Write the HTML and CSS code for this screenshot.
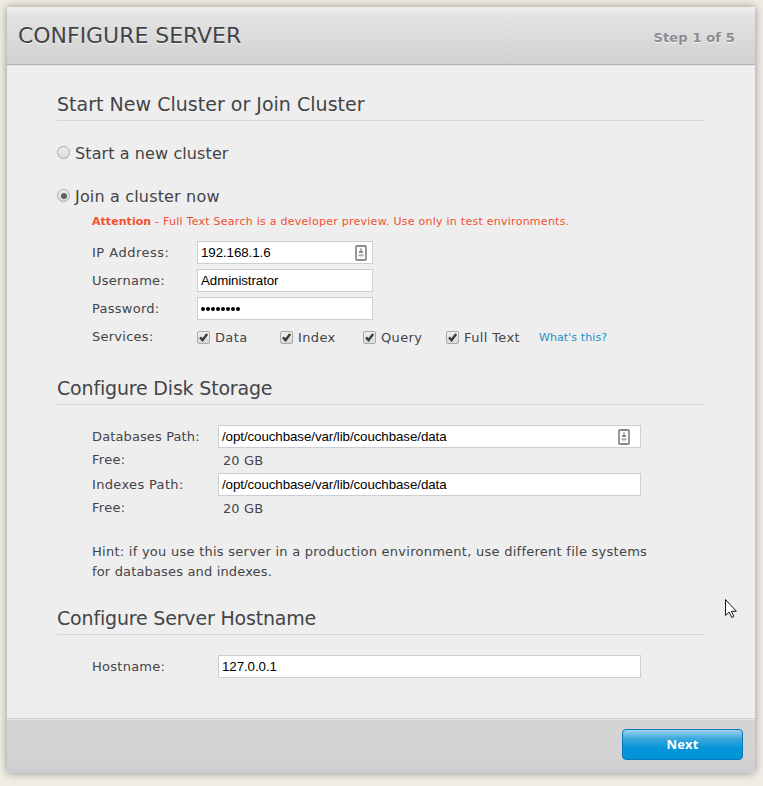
FILE: index.html
```
<!DOCTYPE html>
<html lang="en">
<head>
<meta charset="utf-8">
<title>Configure Server</title>
<link rel="stylesheet" href="styles.css">
</head>
<body>
<svg class="defs" width="0" height="0" aria-hidden="true">
  <symbol id="check" viewBox="0 0 12 12"><path d="M2.2 5.8l2.8 3L10 2.2" fill="none" stroke="#3c3c3c" stroke-width="2.6"/></symbol>
  <symbol id="card" viewBox="0 0 12 16">
    <rect x="1" y="1" width="10" height="14" rx="1" fill="#fff" stroke="#8c8c8c" stroke-width="1.8"/>
    <path d="M6 3.2v4" stroke="#999" stroke-width="1.6"/><path d="M4 7h4" stroke="#8a8a8a" stroke-width="2"/>
    <path d="M3.5 10.3h5" stroke="#aaa" stroke-width="2"/><path d="M4 12h4" stroke="#ddd"/>
  </symbol>
</svg>
<main class="panel">
  <header class="header">
    <h1>CONFIGURE SERVER</h1>
    <span class="step">Step 1 of 5</span>
  </header>
  <div class="content">
    <section class="cluster">
      <h2>Start New Cluster or Join Cluster</h2>
      <div class="choice new"><span class="radio"></span><span class="new-label">Start a new cluster</span></div>
      <div class="choice join"><span class="radio on"></span><span class="join-label">Join a cluster now</span></div>
      <p class="warning"><b>Attention</b> - Full Text Search is a developer preview. Use only in test environments.</p>
      <div class="row"><label class="wide">IP Address:</label><div class="field">192.168.1.6<svg class="card"><use href="#card"/></svg></div></div>
      <div class="row"><label>Username:</label><div class="field">Administrator</div></div>
      <div class="row"><label>Password:</label><div class="field password"><i></i><i></i><i></i><i></i><i></i><i></i><i></i><i></i></div></div>
      <div class="row services"><label>Services:</label>
        <div class="service"><span class="box"><svg><use href="#check"/></svg></span><span>Data</span></div>
        <div class="service"><span class="box"><svg><use href="#check"/></svg></span><span>Index</span></div>
        <div class="service"><span class="box"><svg><use href="#check"/></svg></span><span>Query</span></div>
        <div class="service last"><span class="box"><svg><use href="#check"/></svg></span><span>Full Text</span></div>
        <a class="help">What's this?</a>
      </div>
    </section>
    <section class="storage">
      <h2>Configure Disk Storage</h2>
      <div class="row"><label>Databases Path:</label><div class="field">/opt/couchbase/var/lib/couchbase/data<svg class="card"><use href="#card"/></svg></div></div>
      <div class="row free"><label>Free:</label><span>20 GB</span></div>
      <div class="row"><label class="indexes">Indexes Path:</label><div class="field">/opt/couchbase/var/lib/couchbase/data</div></div>
      <div class="row free"><label>Free:</label><span>20 GB</span></div>
      <p class="hint">Hint: if you use this server in a production environment, use different file systems<br><span>for databases and indexes.</span></p>
    </section>
    <section class="hostname">
      <h2>Configure Server Hostname</h2>
      <div class="row"><label>Hostname:</label><div class="field">127.0.0.1</div></div>
    </section>
  </div>
  <footer class="footer"><button class="next">Next</button></footer>
</main>
<svg class="cursor" viewBox="0 0 12 19" width="12" height="19"><path d="M.5.5v16l3.7-3.4 2.5 5.4 2.2-1-2.5-5.2h5z" fill="#fff" stroke="#151525"/></svg>
</body>
</html>
```
FILE: styles.css
```
* { box-sizing: border-box; }
html, body { margin: 0; height: 786px; overflow: hidden; }
body { background: #f0ede6; padding: 7px 8px 13px 7px; font: 13px/20px "DejaVu Sans", sans-serif; letter-spacing: .26px; color: #444448; }
.defs { position: absolute; }
.panel { height: 766px; display: flex; flex-direction: column; background: #eee; border-radius: 0 0 3px 3px; box-shadow: 0 0 9px rgba(70, 70, 50, .55); }
.header { height: 58px; display: flex; justify-content: space-between; padding: 0 20px 0 11px; border-bottom: 1px solid #b0b6bc; background: linear-gradient(#efefef 0, #e3e3e3 9px, #d1d1d1); box-shadow: 0 1px #dbe0e3, 0 2px #f5f5f5; }
h1 { margin: 15px 0 0; font-size: 22px; line-height: 28px; font-weight: 400; letter-spacing: -.04px; text-shadow: 0 1px #f4f4f4; }
.step { margin-top: 21px; font-weight: 700; letter-spacing: .14px; color: #8b8b90; text-shadow: 0 1px #f4f4f4; }
.content { flex: 1; padding: 27px 50px 0; }
.cluster { height: 284px; }
.storage { height: 230px; }
h2 { height: 29px; margin: 0; border-bottom: 1px solid #d3d9da; font-size: 19px; line-height: 24px; font-weight: 400; letter-spacing: .02px; }
.choice { display: flex; align-items: center; font-size: 16px; line-height: 24px; gap: 5px; letter-spacing: .1px; }
.new { margin-top: 21px; }
.join { margin-top: 19px; letter-spacing: .17px; }
.radio { width: 13px; height: 13px; margin-top: -3px; border: 1px solid #a8a8a8; border-radius: 50%; background: linear-gradient(#eee, #d9d9d9); display: grid; place-items: center; }
.radio.on::after { content: ""; width: 6px; height: 6px; border-radius: 50%; background: #606060; }
.warning { margin: 4px 0 10px 35px; height: 18px; font-size: 11px; line-height: 18px; color: #f05030; white-space: nowrap; }
.warning b { letter-spacing: .05px; }
.row { display: flex; height: 28px; margin-left: 35px; }
label { width: 105px; line-height: 23px; }
.wide { letter-spacing: .5px; }
.indexes { letter-spacing: .34px; }
.field { position: relative; width: 176px; height: 23px; padding-left: 3px; border: 1px solid #c8d0d4; background: #fff; color: #000; font: 13.333px/22px "Liberation Sans", sans-serif; letter-spacing: -.08px; }
.card { position: absolute; width: 12px; height: 16px; right: 5px; top: 3px; }
.password { display: flex; align-items: center; gap: 1px; }
.password i { width: 4px; height: 4px; border-radius: 50%; background: #000; }
.service { display: flex; align-items: center; width: 83px; height: 24px; gap: 5px; letter-spacing: .36px; white-space: nowrap; }
.service span:last-child { padding-top: 2px; }
.service.last { width: auto; margin-right: 19px; }
.box { width: 13px; height: 13px; border: 1px solid #aaa; border-radius: 2px; background: linear-gradient(#efefef, #dadada); }
.box svg { display: block; width: 11px; height: 11px; }
.help { color: #1b8ecb; font-size: 11px; line-height: 25px; letter-spacing: .1px; }
.storage .row { height: 24px; }
.storage h2, .hostname h2 { margin-bottom: 20px; letter-spacing: -.18px; }
.storage label, .hostname label { width: 126px; }
.storage label:not(.indexes) { letter-spacing: .12px; }
.storage .field, .hostname .field { width: 423px; }
.storage .card { right: 10px; }
.storage .free label { line-height: 22px; letter-spacing: .3px; }
.free span { padding-left: 5px; line-height: 24px; letter-spacing: .1px; }
.hint { margin: 21px 0 0 35px; white-space: nowrap; }
.hint span { letter-spacing: .16px; }
.footer { height: 55px; padding: 10px 12px 0; display: flex; justify-content: flex-end; border-top: 1px solid #cfcfcf; border-radius: 0 0 3px 3px; box-shadow: inset 0 1px #e7e7e7; background: linear-gradient(#d4d4d4 0, #d3d3d3 38px, #cdced2); }
.next { width: 121px; height: 31px; padding: 0; border: 1px solid #0878bd; border-radius: 4px; background: linear-gradient(#9fd3ee, #3ca8dc 30%, #0496d8 62%, #0093d5); color: #fff; font: bold 13px/27px "Open Sans", sans-serif; letter-spacing: .1px; }
.cursor { position: absolute; left: 725px; top: 599px; }
```
